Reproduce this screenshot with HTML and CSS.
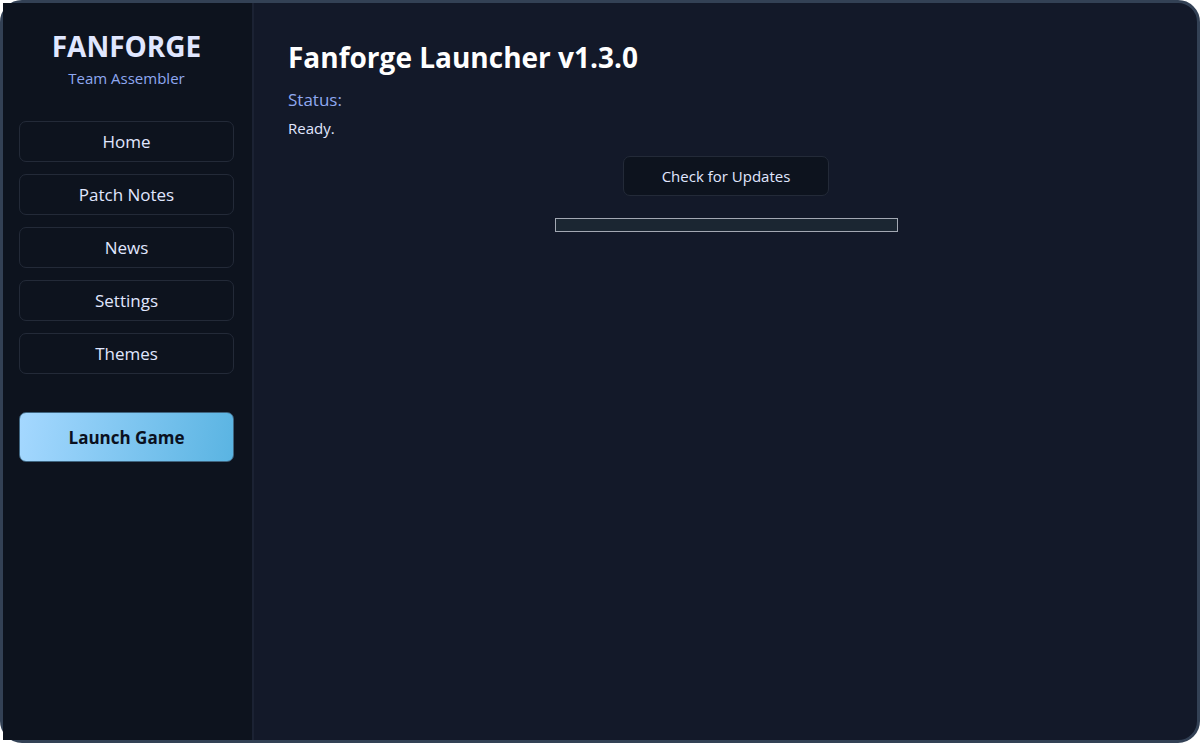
FILE: index.html
```html
<!DOCTYPE html>
<html lang="en">
<head>
    <meta charset="UTF-8">
    <meta name="viewport" content="width=device-width, initial-scale=1.0">
    <title>Fanforge Launcher</title>
    <link rel="stylesheet" href="styles.css">
</head>
<body>

    <div class="window">
        <aside class="sidebar">
            <div class="brand">FANFORGE</div>
            <div class="tagline">Team Assembler</div>

            <nav class="menu">
                <button type="button" class="btn">Home</button>
                <button type="button" class="btn">Patch Notes</button>
                <button type="button" class="btn">News</button>
                <button type="button" class="btn">Settings</button>
                <button type="button" class="btn">Themes</button>
            </nav>

            <button type="button" class="btn launch">Launch Game</button>
        </aside>

        <main class="content">
            <h1>Fanforge Launcher v1.3.0</h1>
            <h2 id="status-label">Status:</h2>
            <p class="status" role="status" aria-labelledby="status-label">Ready.</p>
            <button type="button" class="btn update">Check for Updates</button>
            <progress class="update-progress" value="0" max="100" aria-label="Update progress"></progress>
        </main>
    </div>

</body>
</html>
```

FILE: styles.css
```css
* {
    box-sizing: border-box;
}
body {
    margin: 0;
    background-color: #fff;
    color: #e0e7ff;
    font-family: "Segoe UI", "Open Sans", "Noto Sans", sans-serif;
}
.window {
    display: flex;
    min-height: 100vh;
    border: 3px solid #334155;
    border-radius: 22px;
    background-color: #131929;
}
.sidebar {
    display: flex;
    flex-direction: column;
    flex: 0 0 251px;
    padding: 24px 18px 24px 16px;
    background-color: #0d131e;
    border-right: 2px solid #1b2233;
    text-align: center;
}
.brand {
    font-size: 28px;
    font-weight: 700;
    line-height: 38px;
}
.tagline {
    font-size: 15px;
    line-height: 26px;
    color: #8fa8f0;
}
.menu {
    display: flex;
    flex-direction: column;
    gap: 12px;
    margin: 30px 0 38px;
}
.btn {
    height: 41px;
    padding: 0 38px;
    background-color: #0d131e;
    border: 1px solid #232a38;
    border-radius: 7px;
    color: #e0e7ff;
    font-family: inherit;
    font-size: 17px;
    cursor: pointer;
}
.btn:hover {
    border-color: #475569;
}
.launch {
    height: 50px;
    background: linear-gradient(100deg, #a5d8ff, #5ab4e2);
    border-color: #3f6580;
    color: #0a1020;
    font-weight: 700;
}
.content {
    display: flex;
    flex-direction: column;
    flex: 1;
    padding: 32px 33px 32px 34px;
}
h1 {
    margin: 0;
    color: #fff;
    font-size: 28px;
    line-height: 45px;
}
h2 {
    margin: 6px 0 0;
    color: #8fa8f0;
    font-size: 17px;
    font-weight: 400;
    line-height: 28px;
}
.status {
    margin: 0 0 14px;
    font-size: 15px;
    line-height: 28px;
}
.update {
    align-self: center;
    height: 40px;
    font-size: 15px;
}
.update-progress {
    appearance: none;
    align-self: center;
    width: 343px;
    max-width: 100%;
    height: 14px;
    margin-top: 22px;
    border: 1px solid #a3a8b3;
    background-color: #1b2632;
}
.update-progress::-webkit-progress-bar {
    background-color: #1b2632;
}
.update-progress::-webkit-progress-value {
    background-color: #5ab4e2;
}
```
